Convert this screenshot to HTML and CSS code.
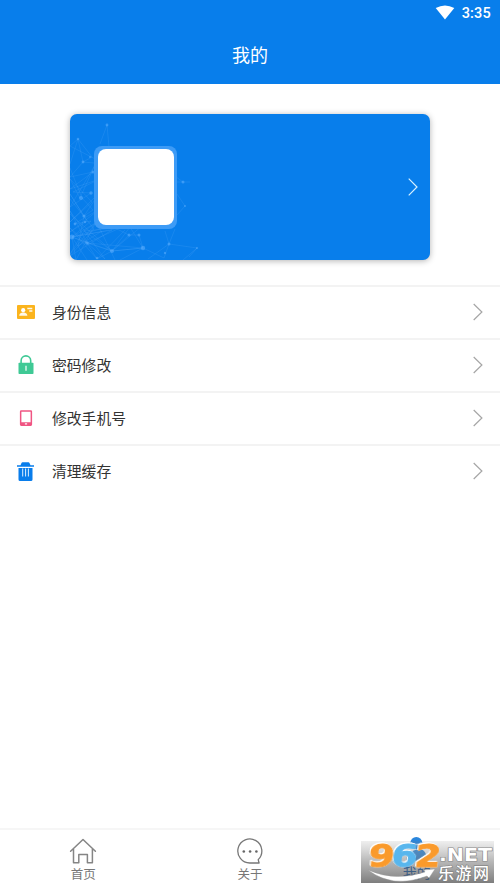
FILE: index.html
```html
<!DOCTYPE html>
<html lang="zh-CN">
<head>
<meta charset="utf-8">
<title>我的</title>
<link rel="stylesheet" href="styles.css">
</head>
<body>
<div class="app">
  <header class="header">
    <div class="status">
      <svg class="wifi" width="20" height="15" viewBox="0 0 20 15"><path d="M.7 3Q10-2.2 19.3 3L10 14.4z" fill="#fff"/></svg>
      <span class="time">3:35</span>
    </div>
    <h1 class="title">我的</h1>
  </header>
  <main class="main">
    <section class="card">
      <svg class="network" width="145" height="146" viewBox="0 0 145 146">
        <g fill="none" stroke="#6db8ff" stroke-opacity=".24" stroke-width=".7">
          <path d="M0 32 8 25 22 43 13 48 8 25 0 50M30 30 37 11 39 33M0 32 35 50 13 48 0 63 23 58 0 75 30 65 3 78 21 79 0 93 25 51 10 84 0 65 22 88 0 108 30 78 14 102 0 80 17 107 0 118 30 95 4 110 21 107 2 123 32 105 14 117 0 140 25 110 6 146 2 123 17 129 0 97 35 145 17 129 73 134 42 137 17 129 27 145 42 137 59 121 69 121 73 134 94 144 99 130 127 134 113 146M113 68 91 52M107 68H120M107 80 115 92 107 101M105 115 99 130 95 117M127 134 119 143M59 121 45 114 14 117 42 137 2 123 30 115 45 146M0 100 42 137 73 134 50 146M2 123 50 114 17 129 0 114 27 145 55 116M73 134 60 113 42 137 72 112M0 85 24 115 0 142 42 116 2 123 17 146M99 130 78 145M0 54 12 84 23 96 14 102 8 132 32 117"/>
        </g>
        <g fill="#5dafff" fill-opacity=".55">
          <circle cx="37" cy="11" r="1.4"/><circle cx="8" cy="25" r="1.3"/><circle cx="13" cy="48" r="1.4"/><circle cx="23" cy="58" r="1.5"/><circle cx="20" cy="43" r="1"/><circle cx="21" cy="79" r="1.7"/><circle cx="11" cy="84" r="2"/><circle cx="14" cy="102" r="1.6"/><circle cx="15" cy="108" r="1.2"/><circle cx="5" cy="110" r="1.4"/><circle cx="2" cy="123" r="2.4"/><circle cx="17" cy="129" r="1.8"/><circle cx="42" cy="137" r="2"/><circle cx="73" cy="134" r="2.2"/><circle cx="59" cy="121" r="1.5"/><circle cx="69" cy="121" r="1.5"/><circle cx="99" cy="130" r="1.5"/><circle cx="95" cy="139" r="1.2"/><circle cx="127" cy="134" r="1"/><circle cx="113" cy="68" r="1.5"/><circle cx="115" cy="92" r="1"/><circle cx="27" cy="144" r="1.3"/>
        </g>
      </svg>
      <div class="avatar"></div>
      <svg class="card-arrow" width="10" height="18" viewBox="0 0 10 18"><path d="m.7.7 8.3 8.3-8.3 8.3"/></svg>
    </section>
    <ul class="menu">
      <li class="row">
        <svg class="icon" width="20" height="20" viewBox="0 0 20 20"><rect x="1" y="3" width="18" height="14" rx="1" fill="#fbb41d"/><circle cx="7.2" cy="8.2" r="2.1" fill="#fff"/><path d="M3.2 13.7c0-2 1.5-2.8 3-3.2h2c1.7.4 3.2 1.2 3.2 3.2zM11.3 5.7h5v1.5h-5zM13.2 8.2h3.2v1.5h-3.2z" fill="#fff" fill-opacity=".9"/></svg>
        <span class="label">身份信息</span>
        <svg class="arrow" width="10" height="18" viewBox="0 0 10 18"><path d="m.7 1 8.2 8L.7 17"/></svg>
      </li>
      <li class="row">
        <svg class="icon" width="20" height="20" viewBox="0 0 20 20"><path d="M5.1 8V5.7a4.8 4.8 0 0 1 9.6 0V8" fill="none" stroke="#3fc995" stroke-width="1.6"/><rect x="2.5" y="7.7" width="15" height="11.3" rx=".8" fill="#3fc995"/><path d="M9.4 10.7h1.2v5H9.4z" fill="#fff"/></svg>
        <span class="label">密码修改</span>
        <svg class="arrow" width="10" height="18" viewBox="0 0 10 18"><path d="m.7 1 8.2 8L.7 17"/></svg>
      </li>
      <li class="row">
        <svg class="icon" width="20" height="20" viewBox="0 0 20 20"><path fill-rule="evenodd" d="M5.2 2.3h9.6q1.3 0 1.3 1.3v13q0 1.3-1.3 1.3H5.2q-1.3 0-1.3-1.3v-13q0-1.3 1.3-1.3zM5.4 3.8v10.4h9.2V3.8z" fill="#f05583"/><rect x="8.9" y="15.3" width="2.2" height="1.2" fill="#fff"/></svg>
        <span class="label">修改手机号</span>
        <svg class="arrow" width="10" height="18" viewBox="0 0 10 18"><path d="m.7 1 8.2 8L.7 17"/></svg>
      </li>
      <li class="row">
        <svg class="icon icon-trash" width="20" height="20" viewBox="0 0 20 20"><path d="M4.5 3.2 5.5 1q.3-.7 1-.7h6q.7 0 1 .7l1 2.2h3.5v1.5H1V3.2zM2.5 6h14v11.6q0 1.5-1.5 1.5H4q-1.5 0-1.5-1.5z" fill="#097deb"/><path d="M6.7 6.5v8M12.4 6.5v8M9.6 6.5v8" stroke="#dceeff" stroke-width="1"/></svg>
        <span class="label">清理缓存</span>
        <svg class="arrow" width="10" height="18" viewBox="0 0 10 18"><path d="m.7 1 8.2 8L.7 17"/></svg>
      </li>
    </ul>
  </main>
  <nav class="tabs">
    <a class="tab">
      <svg class="tab-icon" width="28" height="28" viewBox="0 0 28 28"><path d="M1.6 14.3 14 2.5l12.4 11.8M4.5 12v13.8h5.3v-8.3h8.6v8.3h5V12" fill="none" stroke="#858585" stroke-width="1.5" stroke-linejoin="round" stroke-linecap="round"/></svg>
      <span>首页</span>
    </a>
    <a class="tab">
      <svg class="tab-icon" width="28" height="28" viewBox="0 0 28 28"><path d="M22.2 22.6A12 12 0 1 0 14 26h9.1z" fill="none" stroke="#777" stroke-width="1.3" stroke-linejoin="round"/><g fill="#666"><circle cx="7.8" cy="14.5" r="1.3"/><circle cx="14.1" cy="14.5" r="1.3"/><circle cx="20.4" cy="14.5" r="1.3"/></g></svg>
      <span>关于</span>
    </a>
    <a class="tab tab-active">
      <svg class="tab-icon" width="28" height="28" viewBox="0 0 28 28"><circle cx="13.3" cy="6" r="6" fill="#2a86dc"/><path d="M8 5.5q5.3 4 10.6 0" stroke="#a8d0f3" stroke-width="1.3" fill="none"/><path d="M3 25q0-10 10.5-12.5T24 25z" fill="#3f94e2"/></svg>
      <span>我的</span>
    </a>
  </nav>
  <svg class="watermark" width="133" height="42" viewBox="0 0 133 42">
    <defs>
      <linearGradient id="shade" x1="0" y1="0" x2="0" y2="1"><stop offset="0" stop-color="#777" stop-opacity=".12"/><stop offset=".5" stop-color="#666" stop-opacity=".48"/><stop offset="1" stop-color="#555" stop-opacity=".76"/></linearGradient>
    </defs>
    <rect width="133" height="42" fill="url(#shade)"/>
    <g class="digits" transform="translate(5 0) skewX(-7)">
      <text x="4.5" y="26" textLength="26" lengthAdjust="spacingAndGlyphs" fill="#fa9a2b" stroke="#fa9a2b">9</text>
      <text x="27.5" y="26" textLength="26" lengthAdjust="spacingAndGlyphs" fill="#58b6ed" stroke="#58b6ed">6</text>
      <text x="51" y="26" textLength="26" lengthAdjust="spacingAndGlyphs" fill="#fa9a2b" stroke="#fa9a2b">2</text>
    </g>
    <path d="M7 29q27 12 57 2l-1-2 11-1-6 9-2-2Q32 48 7 29z" fill="#fff" stroke="#999" stroke-width=".4"/>
    <text class="net" x="78" y="20" textLength="53" lengthAdjust="spacingAndGlyphs">.NET</text>
    <text class="site" x="77" y="37.5" textLength="51">乐游网</text>
  </svg>
</div>
</body>
</html>
```
FILE: styles.css
```css
* { box-sizing: border-box; }
body {
  margin: 0;
  background: #fff;
  color: #333;
  font-family: "Noto Sans CJK SC", sans-serif;
}
.app {
  position: relative;
  display: flex;
  flex-direction: column;
  height: 889px;
  padding-bottom: 6px;
  overflow: hidden;
}
.header { height: 84px; background: #087eeb; color: #fff; }
.status {
  display: flex;
  justify-content: flex-end;
  align-items: center;
  gap: 7px;
  height: 26px;
  padding-right: 9px;
}
.wifi { margin-bottom: 1px; }
.time { font: 500 14.5px/27px Roboto, sans-serif; letter-spacing: .2px; padding-top: 1px; }
.title { margin: 0; font-size: 18px; font-weight: 400; line-height: 56px; text-align: center; }
.main { flex: 1; }
.card {
  position: relative;
  display: flex;
  align-items: center;
  justify-content: space-between;
  width: 360px;
  height: 146px;
  margin: 30px auto 25px;
  padding: 0 12px 0 24px;
  border-radius: 7px;
  background: #087eeb;
  box-shadow: 0 1px 6px rgba(0, 0, 0, .3);
}
.network { position: absolute; left: 0; top: 0; border-radius: 7px; }
.avatar {
  position: relative;
  width: 83px;
  height: 83px;
  padding: 3.5px;
  border-radius: 8px;
  background: #3d9bf6;
}
.avatar::before {
  content: "";
  display: block;
  width: 100%;
  height: 100%;
  border-radius: 8px;
  background: #fff;
}
.card-arrow { fill: none; stroke: #d7f1ff; stroke-width: 1.2; }
.menu { margin: 0; padding: 0; list-style: none; }
.row {
  display: flex;
  align-items: center;
  height: 53.1px;
  padding: 0 17px 2px 16px;
  border-top: 2px solid #f3f3f3;
}
.icon { margin-right: 16px; }
.icon-trash { margin-top: 2px; }
.label { flex: 1; font-size: 14.8px; line-height: 22px; }
.arrow { fill: none; stroke: #a6a6a6; stroke-width: 1.2; }
.tabs { display: flex; height: 55px; border-top: 2px solid #f6f6f6; }
.tab {
  flex: 1;
  display: flex;
  flex-direction: column;
  align-items: center;
  padding-top: 7px;
  color: #777;
  font-size: 12.5px;
  line-height: 18px;
}
.tab-icon { flex: none; }
.tab-active { color: #0a62c4; font-size: 14px; line-height: 15px; }
.watermark { position: absolute; left: 361px; top: 841px; overflow: visible; }
.digits {
  font: bold 32px "DejaVu Sans", sans-serif;
  stroke-width: .9;
  filter: drop-shadow(.7px .7px 0 #fff) drop-shadow(-.6px -.6px 0 #fff);
}
.net {
  font: bold 17px "DejaVu Sans", sans-serif;
  fill: #fff;
  stroke: #888;
  stroke-width: 1.2;
  paint-order: stroke;
}
.site {
  font: 500 16px "Noto Sans CJK SC", sans-serif;
  fill: #fff;
  stroke: #777;
  stroke-width: 1;
  paint-order: stroke;
}
```
